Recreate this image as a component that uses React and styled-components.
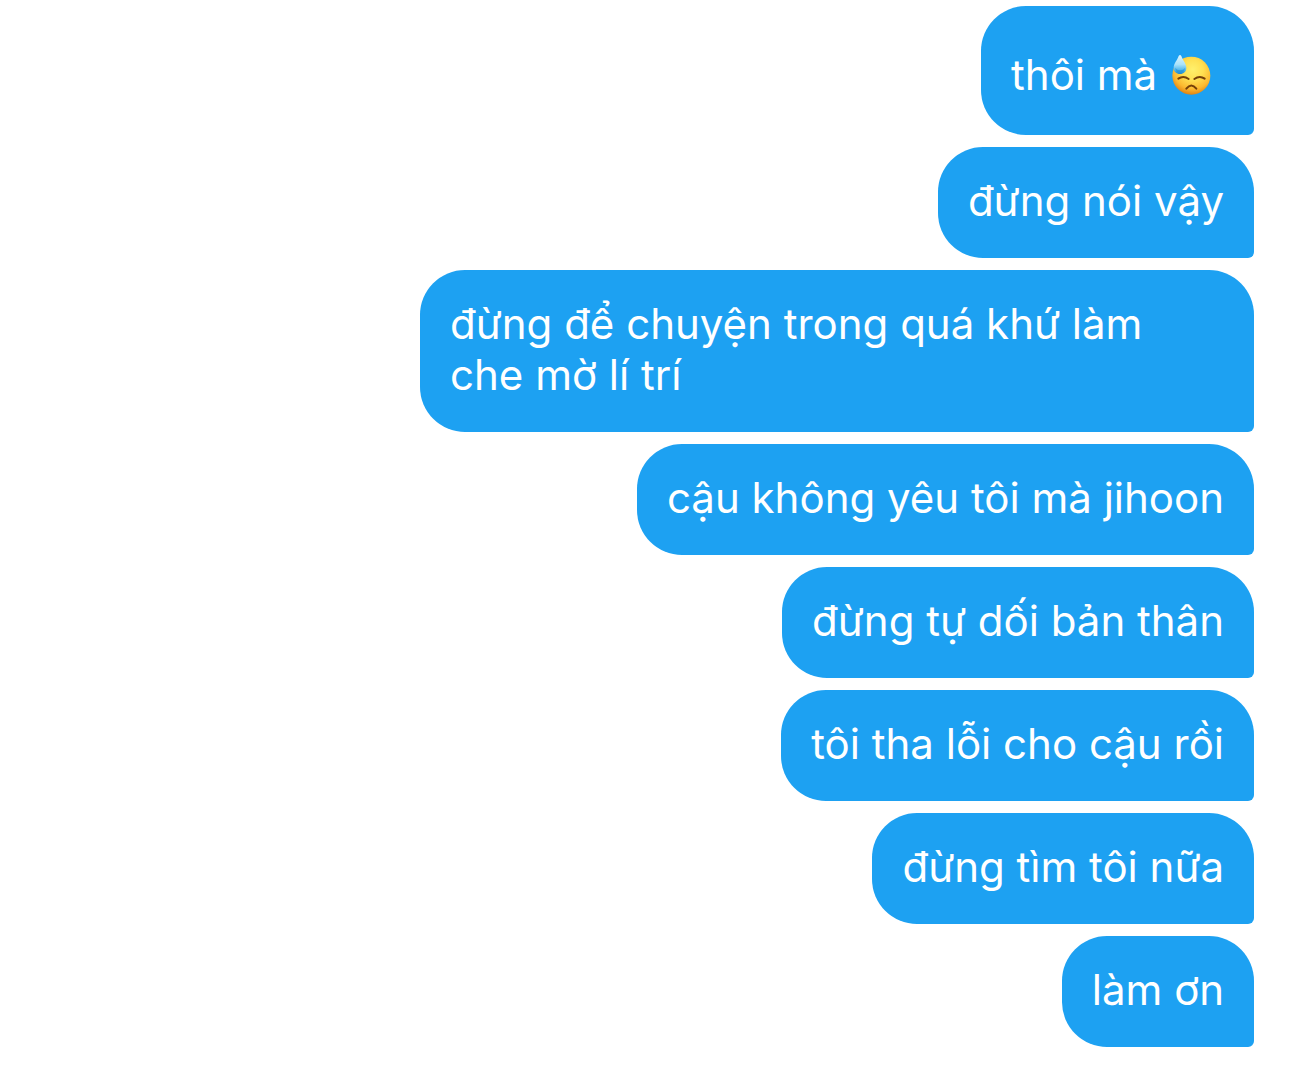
import React from 'react';
import styled, { createGlobalStyle } from 'styled-components';

const GlobalStyle = createGlobalStyle`
  * {
    box-sizing: border-box;
  }

  body {
    margin: 0;
    background: #ffffff;
    font-family: Inter, 'Noto Sans', sans-serif;
  }
`;

const Conversation = styled.main`
  padding: 6px 36px 22px;

  @media (max-width: 480px) {
    padding: 6px 12px;
  }
`;

const MessageList = styled.ul`
  display: flex;
  flex-direction: column;
  align-items: flex-end;
  gap: 12px;
  margin: 0;
  padding: 0;
  list-style: none;
`;

const Bubble = styled.li`
  max-width: calc(100% - 384px);
  padding: 28px 30px 32px;
  border-radius: 45px 45px 6px 45px;
  background: #1da1f2;
  color: #ffffff;
  font-size: 42px;
  line-height: 51px;
  overflow-wrap: break-word;

  @media (max-width: 900px) {
    max-width: 90%;
  }
`;

const Emoji = styled.svg`
  width: 40px;
  height: 40px;
  margin: 21px 13px 8px 2px;
  vertical-align: -13px;
`;

function SweatFace() {
  return (
    <Emoji viewBox="0 0 120 120" role="img" aria-label="😓">
      <defs>
        <radialGradient id="face" cx="0.54" cy="0.34" r="0.68">
          <stop offset="0" stopColor="#fff06c" />
          <stop offset="0.4" stopColor="#ffe052" />
          <stop offset="0.75" stopColor="#fcb930" />
          <stop offset="1" stopColor="#dd7d10" />
        </radialGradient>
        <linearGradient id="drop" x1="0" y1="0" x2="0" y2="1">
          <stop offset="0" stopColor="#dff5fe" />
          <stop offset="0.5" stopColor="#a9e2fa" />
          <stop offset="0.8" stopColor="#4fb6ec" />
          <stop offset="1" stopColor="#1f86cc" />
        </linearGradient>
      </defs>
      <circle cx="61" cy="62" r="57" fill="url(#face)" />
      <g fill="none" stroke="#754008" strokeWidth="6" strokeLinecap="round">
        <path d="M22 71 Q37 60 53 72" />
        <path d="M70 72 Q86 60 101 71" />
        <path d="M46 101 Q61 82 76 101" />
      </g>
      <path
        d="M23 3 Q27 -3 31 3 C35 16 46 25 46 39 C46 50 38 57 27 57 C16 57 8 50 8 39 C8 25 19 16 23 3 Z"
        fill="url(#drop)"
      />
      <path
        d="M13 38 C13 49 20 53 27 53 C34 53 41 49 42 38 C37 48 18 48 13 38 Z"
        fill="#1c8fda"
        opacity="0.6"
      />
    </Emoji>
  );
}

const messages = [
  { text: 'thôi mà', emoji: true },
  { text: 'đừng nói vậy' },
  { text: 'đừng để chuyện trong quá khứ làm che mờ lí trí' },
  { text: 'cậu không yêu tôi mà jihoon' },
  { text: 'đừng tự dối bản thân' },
  { text: 'tôi tha lỗi cho cậu rồi' },
  { text: 'đừng tìm tôi nữa' },
  { text: 'làm ơn' },
];

export default function App() {
  return (
    <>
      <GlobalStyle />
      <Conversation>
        <MessageList>
          {messages.map(({ text, emoji }) => (
            <Bubble key={text}>
              {text}
              {emoji && <> <SweatFace /></>}
            </Bubble>
          ))}
        </MessageList>
      </Conversation>
    </>
  );
}
